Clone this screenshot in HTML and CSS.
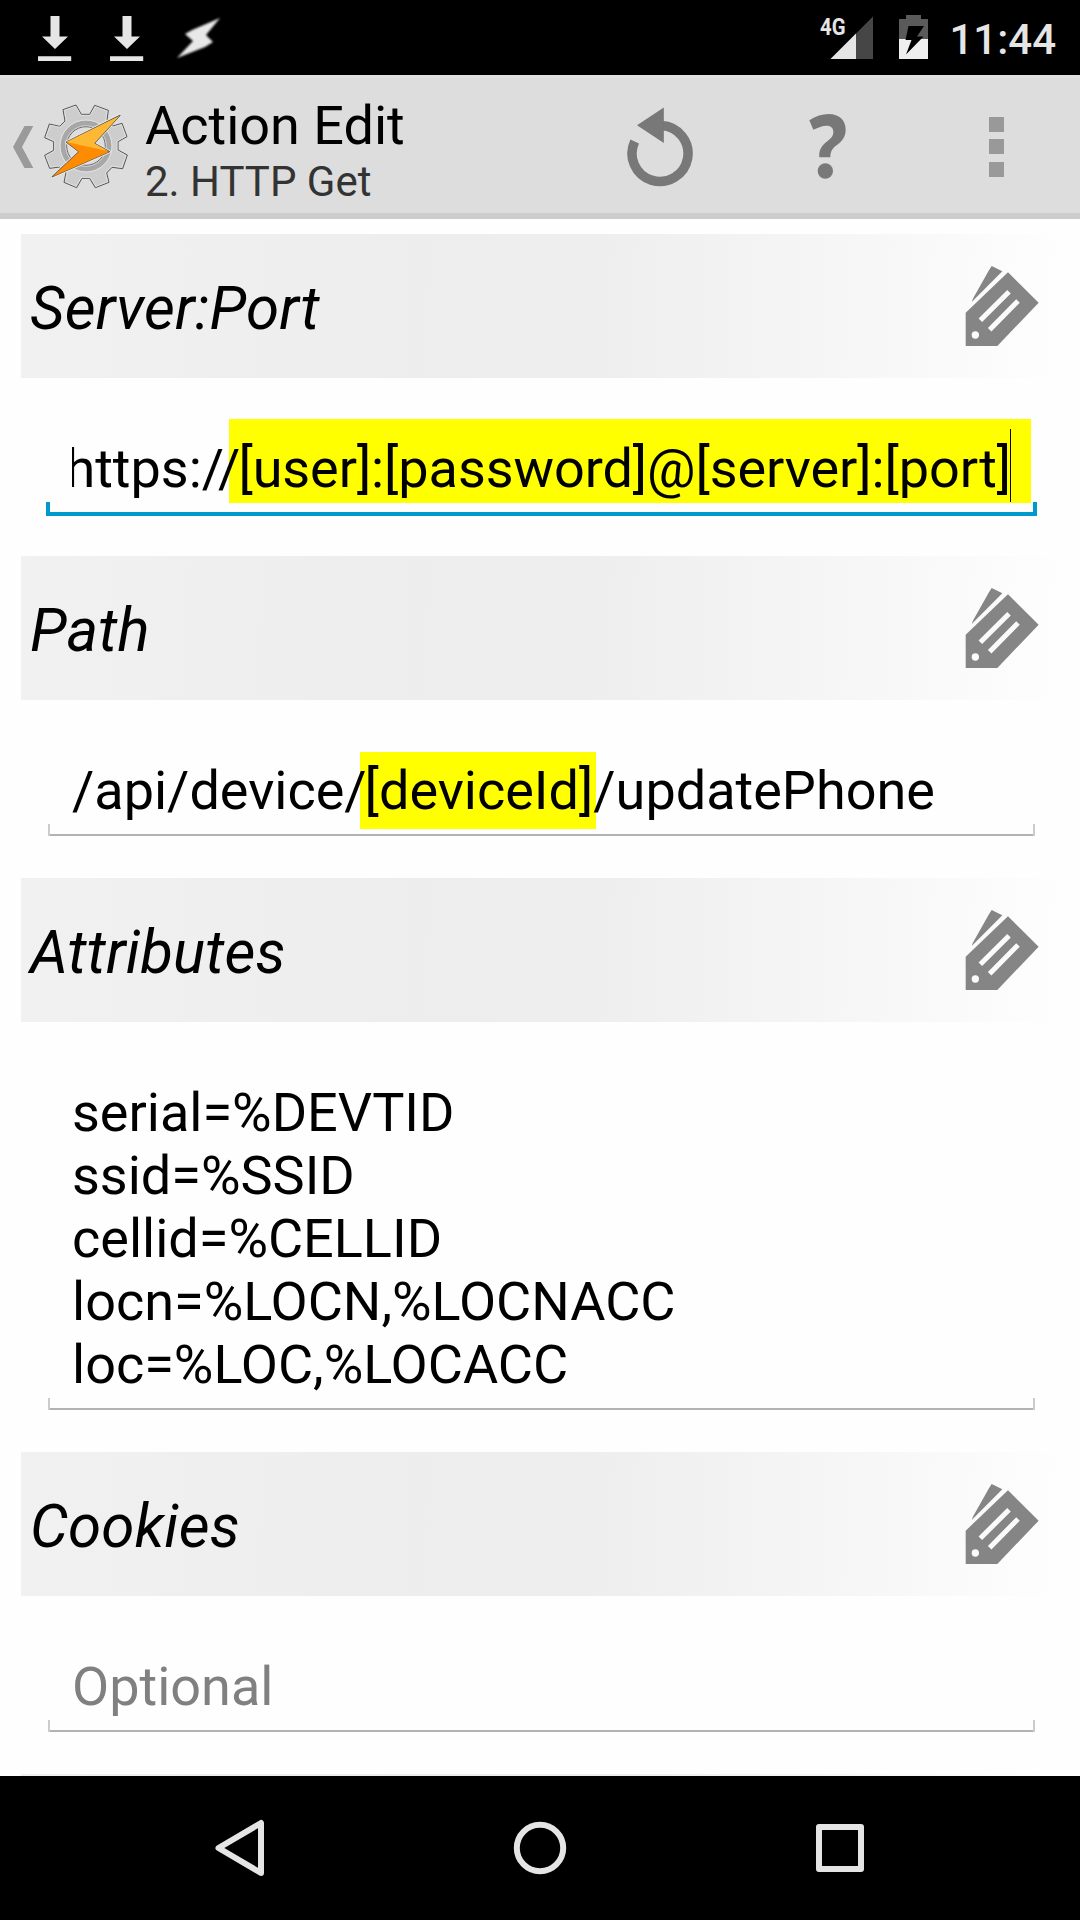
FILE: index.html
```html
<!DOCTYPE html>
<html lang="en">
<head>
<meta charset="utf-8">
<title>Action Edit</title>
<link rel="stylesheet" href="styles.css">
</head>
<body>
<svg class="defs" aria-hidden="true">
  <symbol id="download" viewBox="0 0 34 46">
    <path fill="#e5e5e5" d="M12.500 0h9v20.500H30L17 33 4 20.500h8.500zM0 40.300h33.200V45H0z"/>
  </symbol>
  <symbol id="tags" viewBox="75 75 225 246">
    <path fill="#858585" d="M155 78 187 94 101 180 96 186C97 177 103 170 108 160L146 92Z"/>
    <path fill="#858585" d="M77 218 204 97 296 188 172 318H77Z"/>
    <circle cx="106" cy="285" r="11" fill="#fbfbfb"/>
    <path stroke="#fbfbfb" stroke-width="15" d="M121 241 207 155M149 269 234 183"/>
  </symbol>
</svg>

<header class="status">
  <div class="notifications">
    <svg width="34" height="46"><use href="#download"/></svg>
    <svg width="34" height="46"><use href="#download"/></svg>
    <svg class="flash" width="46" height="46" viewBox="175 15 46 46"><path fill="#e8e8e8" d="M220 18 206 35 213 42 205 47 177 58 193 41 185 34 192 30Z"/></svg>
  </div>
  <div class="indicators">
    <svg class="signal" width="56" height="46" viewBox="820 15 56 46">
      <path fill="#464646" d="M831.500 59H874V16.500Z"/>
      <path fill="#e5e5e5" d="M831.500 59H857V33.500Z"/>
      <text class="network" x="821" y="35" textLength="25.500" lengthAdjust="spacingAndGlyphs">4G</text>
    </svg>
    <svg width="30" height="46" viewBox="899 15 30 46">
      <path fill="#5a5a5a" d="M906 15h15v4h7v20.500H899V19h7z"/>
      <path fill="#efefef" d="M899 39h29v20h-29z"/>
      <path d="M908.500 26H924L917 36.500H923.500L906 54.500 911.500 40H905.500Z"/>
    </svg>
    <span class="clock">11:44</span>
  </div>
</header>

<nav class="action-bar">
  <svg class="back" width="22" height="44" viewBox="12 125 22 44"><path fill="#9a9a9a" d="M24.500 126H33.300L22 147 33.300 168H24.500L13 147Z"/></svg>
  <svg class="logo" width="90" height="90" viewBox="32 30 270 270">
    <path fill="#cdcdcd" stroke="#555" stroke-width="3" stroke-linejoin="round" d="M98 59 137 45 153 73H178L193 46 234 61 230 91 247 108 275 100 290 140 263 155V180L291 195 277 236 245 232 229 249 236 277 195 293 178 265H155L139 293 101 277 107 248 88 231 58 235 43 196 70 181V155L43 143 57 102 88 109 104 93Z"/>
    <path fill="none" stroke="#e9e9e9" stroke-width="2" d="M102 61 136 49 151 76H180L195 50 230 63 226 92 246 112 273 104 286 139 260 153V182L287 197 274 232 244 228 225 248 232 275 197 289 180 262H153L137 289 105 275 111 247 89 228 60 231 47 198 73 183V153L47 141 60 106 89 112 108 93Z"/>
    <circle cx="167" cy="168" r="68" fill="none" stroke="#a7a7a7" stroke-width="17"/>
    <circle cx="167" cy="168" r="78" fill="none" stroke="#ededed" stroke-width="2"/>
    <circle cx="167" cy="168" r="58" fill="#ddd" stroke="#666" stroke-width="3"/>
    <circle cx="167" cy="168" r="61" fill="none" stroke="#e6e6e6" stroke-width="2"/>
    <path fill="none" stroke="#eee" stroke-width="9" stroke-linejoin="round" d="M268 76 192 160 237 185 67 260 146 185 108 156Z"/>
    <path fill="#ff8c00" stroke="#555" stroke-width="4" stroke-linejoin="round" d="M269 76 192 160 237 185 66 260 146 185 108 156Z"/>
    <path fill="#ff8c00" d="M108 156 237 185 66 260 146 185Z"/>
    <path fill="#ffb833" d="M268 77 192 160 235 184 108 156Z"/>
  </svg>
  <div class="titles">
    <h1 class="title">Action Edit</h1>
    <p class="subtitle">2. HTTP Get</p>
  </div>
  <div class="actions">
    <svg width="68" height="81" viewBox="626.500 106 68 81">
      <path fill="none" stroke="#787878" stroke-width="9.500" d="M661 125.500A28 28 0 1 1 634.200 141.500"/>
      <path fill="#787878" d="M636.500 125.300 663.300 107.500V143Z"/>
    </svg>
    <svg class="help" width="38" height="68" viewBox="629 100 114 204">
      <path fill="#787878" d="M630 122C650 109 668 103 688 103 720 103 739 122 739 150 739 172 728 184 712 197 700 206 693 214 693 233H660C659 214 663 202 680 188 694 177 702 170 702 157 702 145 695 138 682 138 669 138 657 143 642 150Z"/>
      <circle cx="678" cy="274" r="23" fill="#787878"/>
    </svg>
    <svg width="15" height="60" viewBox="0 0 15 60"><path fill="#999" d="M0 0h15v15H0zM0 22h15v15H0zM0 45h15v15H0z"/></svg>
  </div>
</nav>

<main class="form">
  <section class="group">
    <h2 class="head"><span>Server:Port</span><svg width="75" height="82"><use href="#tags"/></svg></h2>
    <div class="field focused">
      <div class="viewport"><span class="url">https://<mark class="mark">[user]:[password]@[server]:[port]<i class="caret"></i></mark></span></div>
    </div>
  </section>
  <section class="group">
    <h2 class="head"><span>Path</span><svg width="75" height="82"><use href="#tags"/></svg></h2>
    <div class="field"><p class="value">/api/device/<mark class="mark">[deviceId]</mark>/updatePhone</p></div>
  </section>
  <section class="group tall">
    <h2 class="head"><span>Attributes</span><svg width="75" height="82"><use href="#tags"/></svg></h2>
    <div class="field"><p class="value">serial=%DEVTID<br>ssid=%SSID<br>cellid=%CELLID<br>locn=%LOCN,%LOCNACC<br>loc=%LOC,%LOCACC</p></div>
  </section>
  <section class="group">
    <h2 class="head"><span>Cookies</span><svg width="75" height="82"><use href="#tags"/></svg></h2>
    <div class="field"><p class="value hint">Optional</p></div>
  </section>
  <div class="head"></div>
</main>

<footer class="nav-bar">
  <svg width="60" height="60" viewBox="210 1818 60 60"><path d="M218.500 1848 261 1823V1873Z"/></svg>
  <svg width="60" height="60" viewBox="510 1818 60 60"><circle cx="540" cy="1848" r="23.200"/></svg>
  <svg width="60" height="60" viewBox="810 1818 60 60"><path d="M819 1827h42v42h-42z"/></svg>
</footer>
</body>
</html>
```
FILE: styles.css
```css
* { box-sizing: border-box; }

body {
  margin: 0;
  width: 1080px;
  height: 1920px;
  overflow: hidden;
  display: flex;
  flex-direction: column;
  background: #fefefe;
  color: #000;
  font-family: Roboto, "Noto Sans", sans-serif;
}

h1, h2, p { margin: 0; font-weight: 400; }
svg { display: block; flex: none; }
.defs { position: absolute; width: 0; height: 0; }

/* status bar */
.status {
  flex: none;
  height: 75px;
  padding: 0 24px 0 38px;
  display: flex;
  justify-content: space-between;
  background: #000;
  color: #e5e5e5;
}
.notifications { display: flex; gap: 38px; padding-top: 16px; }
.flash { margin: -1px 0 0 -7px; filter: blur(0.8px); }
.indicators { display: flex; padding-top: 15px; }
.indicators svg + svg { margin-left: 23px; }
.signal { overflow: visible; margin-right: 1px; }
.network { font-size: 24px; font-weight: 700; fill: #e5e5e5; }
.clock { margin-left: 20px; font-size: 42px; font-weight: 500; line-height: 49px; }

/* action bar */
.action-bar {
  flex: none;
  height: 144px;
  padding: 5px 0 0 12px;
  display: flex;
  align-items: center;
  background: linear-gradient(#e2e2e2, #ddd 4px);
  border-bottom: 6px solid #ccc;
}
.back { margin-top: 1px; }
.logo { margin: -3px 0 0 7px; }
.titles { margin: 7px 0 0 14px; }
.title { font-size: 54px; line-height: 63px; }
.subtitle { font-size: 42px; line-height: 49px; color: #333; }
.actions { flex: 1; display: flex; align-items: center; justify-content: space-between; padding-right: 76px; margin-left: 222px; }
.help { margin-right: 27px; }

/* form */
.form { flex: none; height: 1557px; padding-top: 15px; overflow: hidden; }
.group { height: 322px; display: flex; flex-direction: column; }
.group.tall { height: 574px; }
.head {
  flex: none;
  height: 144px;
  margin: 0 20px 0 21px;
  padding: 0 20.5px 0 9px;
  display: flex;
  align-items: center;
  justify-content: space-between;
  background: linear-gradient(92deg, #f1f1f1, #ededed 38%, #eee 55%, #f7f7f7 82%, #fefefe);
  font-size: 60px;
  font-style: italic;
  letter-spacing: 0.15px;
}
.head span { padding-top: 4px; }
.field {
  flex: 1;
  position: relative;
  margin: 0 45px 42px 48px;
  padding: 0 0 12px 24px;
  display: flex;
  align-items: flex-end;
  border-bottom: 2px solid #b2b2b2;
}
.field::before,
.field::after {
  content: "";
  position: absolute;
  bottom: -2px;
  width: 2px;
  height: 12px;
  background: #ccc;
}
.field::before { left: 0; }
.field::after { right: 0; }
.value { isolation: isolate; font-size: 54px; line-height: 63px; white-space: nowrap; }
.hint { color: #808080; }

/* the highlight reaches under the slash on its left, so it is layered below the plain text */
.mark { position: relative; z-index: -1; margin: 0 -3px 0 -7px; padding: 7px 3px 7px 5px; background: #ff0; color: inherit; }

.focused { margin: 0 43px 40px 46px; padding: 0 0 9px 26px; border-bottom: 4px solid #0099cc; }
.focused::before,
.focused::after { bottom: -4px; width: 4px; height: 14px; background: #0099cc; }
.viewport { width: 959px; height: 84px; display: flex; justify-content: flex-end; overflow: hidden; }
.url { isolation: isolate; flex: none; padding-top: 18px; font-size: 54px; line-height: 63px; white-space: nowrap; }
.focused .mark { margin: 0 0 0 -11px; padding: 18px 20px 4px 9px; letter-spacing: -0.08px; }
.caret { position: absolute; right: 20px; top: 10px; width: 1px; height: 73px; background: #000; }

/* navigation bar */
.nav-bar {
  flex: none;
  height: 144px;
  padding: 0 210px;
  display: flex;
  align-items: center;
  justify-content: space-between;
  background: #000;
}
.nav-bar svg { fill: none; stroke: #e5e5e5; stroke-width: 6; stroke-linejoin: round; }
```
